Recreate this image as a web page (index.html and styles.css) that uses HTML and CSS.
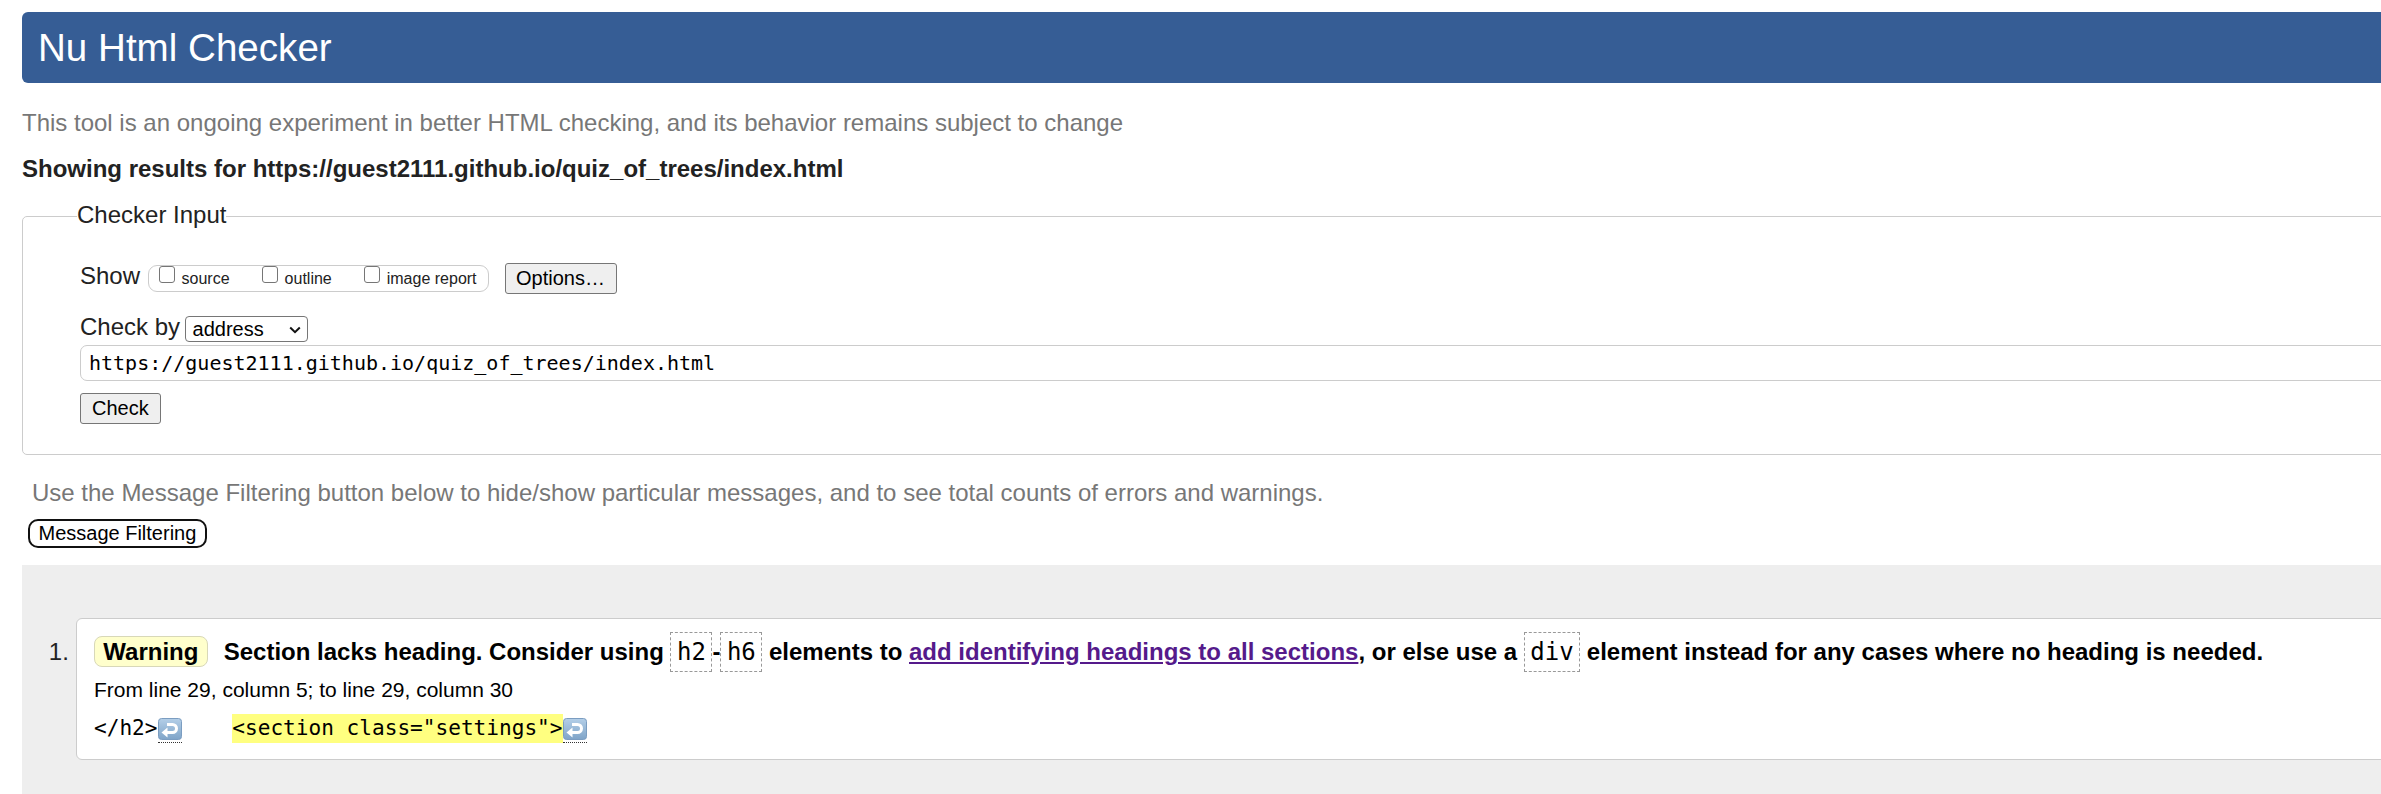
FILE: index.html
```html
<!DOCTYPE html>
<html lang="en">
<head>
<meta charset="utf-8">
<title>Nu Html Checker</title>
<link rel="stylesheet" href="styles.css">
</head>
<body>
<div class="page">
  <h1 class="title">Nu Html Checker</h1>
  <p class="intro">This tool is an ongoing experiment in better HTML checking, and its behavior remains subject to change</p>
  <p class="showing">Showing results for https://guest2111.github.io/quiz_of_trees/index.html</p>

  <form class="checker-form" onsubmit="return false">
    <fieldset class="input-box">
      <legend>Checker Input</legend>
      <div class="row row-show">
        <span class="lbl">Show</span>
        <span class="opts">
          <label class="opt"><input type="checkbox"><span>source</span></label>
          <label class="opt"><input type="checkbox"><span>outline</span></label>
          <label class="opt"><input type="checkbox"><span>image report</span></label>
        </span>
        <button type="button" class="btn options">Options…</button>
      </div>
      <div class="row row-by">
        <span class="lbl">Check by</span>
        <span class="select"><span>address</span><svg class="chev" width="12" height="8" viewBox="0 0 12 8"><path d="M1.2 1.5 L6 6.2 L10.8 1.5" fill="none" stroke="#111" stroke-width="2"/></svg></span>
      </div>
      <input class="url" type="text" value="https://guest2111.github.io/quiz_of_trees/index.html">
      <button type="button" class="btn check">Check</button>
    </fieldset>
  </form>

  <p class="filter-note">Use the Message Filtering button below to hide/show particular messages, and to see total counts of errors and warnings.</p>
  <button type="button" class="filter-btn">Message Filtering</button>

  <div class="results">
    <ol class="messages">
      <li class="msg">
        <p class="msg-head"><span class="badge">Warning</span>Section lacks heading. Consider using <code>h2</code>-<code>h6</code> elements to <a href="#">add identifying headings to all sections</a>, or else use a <code>div</code> element instead for any cases where no heading is needed.</p>
        <p class="location">From line 29, column 5; to line 29, column 30</p>
        <p class="extract">&lt;/h2&gt;<b class="lf" title="Line break"><svg width="24" height="22" viewBox="0 0 24 22"><defs><linearGradient id="lfa" x1="0" y1="0" x2="0" y2="1"><stop offset="0" stop-color="#b4cfe8"/><stop offset="1" stop-color="#7fa4c8"/></linearGradient></defs><rect x="0.5" y="0.5" width="23" height="21" rx="3" fill="url(#lfa)" stroke="#7b9dc1"/><path d="M9 6.5 H14.5 A4 4 0 0 1 14.5 14.5 H8" fill="none" stroke="#fff" stroke-width="3"/><path d="M3.5 14.5 L9.5 9.5 V19.5 Z" fill="#fff"/></svg></b>    <mark>&lt;section class="settings"&gt;</mark><b class="lf" title="Line break"><svg width="24" height="22" viewBox="0 0 24 22"><defs><linearGradient id="lfb" x1="0" y1="0" x2="0" y2="1"><stop offset="0" stop-color="#b4cfe8"/><stop offset="1" stop-color="#7fa4c8"/></linearGradient></defs><rect x="0.5" y="0.5" width="23" height="21" rx="3" fill="url(#lfb)" stroke="#7b9dc1"/><path d="M9 6.5 H14.5 A4 4 0 0 1 14.5 14.5 H8" fill="none" stroke="#fff" stroke-width="3"/><path d="M3.5 14.5 L9.5 9.5 V19.5 Z" fill="#fff"/></svg></b></p>
      </li>
    </ol>
  </div>
</div>
</body>
</html>
```

FILE: styles.css
```css
html, body {
  margin: 0;
  padding: 0;
  background: #fff;
  overflow: hidden;
}

body {
  font-family: "Liberation Sans", Arial, sans-serif;
  color: #222;
}

.page {
  width: 2600px;
  padding-left: 22px;
}

.title {
  margin: 12px 0 0;
  height: 71px;
  line-height: 71px;
  padding: 0 16px;
  font-size: 38.6px;
  font-weight: normal;
  color: #fff;
  background: #365d95;
  border-radius: 6px;
}

.intro {
  margin: 26px 0 0;
  font-size: 24px;
  line-height: 28px;
  color: #777;
}

.showing {
  margin: 18px 0 0;
  font-size: 24px;
  line-height: 28px;
  font-weight: bold;
  color: #222;
}

.checker-form {
  margin: 0;
}

.input-box {
  margin: 18px 0 0;
  padding: 0 0 30px 57px;
  border: 1px solid #ccc;
  border-radius: 5px;
  min-width: 0;
}

.input-box legend {
  margin-left: -3px;
  padding: 0 0 3px;
  font-size: 24px;
  line-height: 28px;
  color: #222;
}

.row {
  display: flex;
  align-items: flex-start;
}

.row-show {
  margin-top: 30px;
  height: 32px;
}

.lbl {
  font-size: 24px;
  line-height: 28px;
}

.opts {
  display: flex;
  align-items: flex-start;
  box-sizing: border-box;
  height: 27px;
  margin: 3px 0 0 7.5px;
  padding: 0 11px 0 10px;
  border: 1px solid #ccc;
  border-radius: 9px;
}

.opt {
  display: flex;
  align-items: flex-start;
  font-size: 16px;
  line-height: 20px;
  margin-right: 32px;
  color: #222;
}

.opt:last-child {
  margin-right: 0;
}

.opt input {
  appearance: none;
  -webkit-appearance: none;
  box-sizing: border-box;
  width: 16px;
  height: 17px;
  margin: 0 7px 0 0;
  border: 1px solid #767676;
  border-radius: 3px;
  background: #fff;
}

.opt span {
  margin-top: 2.8px;
}

.btn {
  box-sizing: border-box;
  height: 31px;
  font-family: "Liberation Sans", Arial, sans-serif;
  font-size: 20px;
  line-height: 23px;
  color: #000;
  background: #efefef;
  border: 1px solid #767676;
  border-radius: 3px;
  padding: 0 10.5px;
}

.options {
  margin: 1px 0 0 16px;
}

.row-by {
  margin-top: 19px;
  height: 29px;
}

.select {
  box-sizing: border-box;
  display: flex;
  align-items: center;
  justify-content: space-between;
  width: 123px;
  height: 26px;
  margin: 3px 0 0 5px;
  padding: 0 6px 0 6.5px;
  border: 1px solid #767676;
  border-radius: 4px;
  font-size: 20px;
  line-height: 24px;
  color: #000;
  background: #fff;
}

.chev {
  display: block;
  margin-top: 1px;
}

.url {
  display: block;
  box-sizing: border-box;
  width: 100%;
  height: 36px;
  margin: 3px 0 0;
  padding: 0 8px;
  border: 1px solid #ccc;
  border-radius: 7px;
  font-family: "DejaVu Sans Mono", monospace;
  font-size: 20px;
  color: #000;
  background: #fff;
  outline: none;
}

.check {
  display: block;
  margin-top: 12px;
  padding: 0 11px;
}

.filter-note {
  margin: 24.4px 0 0 10px;
  font-size: 24px;
  line-height: 28px;
  color: #777;
}

.filter-btn {
  display: block;
  box-sizing: border-box;
  height: 29px;
  margin: 11.6px 0 0 6px;
  padding: 0 8.5px;
  font-family: "Liberation Sans", Arial, sans-serif;
  font-size: 20px;
  line-height: 23px;
  color: #000;
  background: #fff;
  border: 2px solid #111;
  border-radius: 10px;
}

.results {
  margin-top: 17px;
  min-height: 280px;
  background: #eee;
}

.messages {
  margin: 0;
  padding: 53px 0 0 53.5px;
  list-style: decimal outside;
}

.msg {
  border: 1px solid #ccc;
  border-radius: 6px;
  background: #fff;
  padding: 17px 17.5px 16px;
  color: #000;
}

.msg::marker {
  font-size: 24px;
  color: #222;
}

.msg-head {
  margin: 0;
  font-size: 24px;
  line-height: 28px;
  font-weight: bold;
  color: #000;
}

.badge {
  display: inline-block;
  padding: 0 8.3px;
  line-height: 29px;
  border: 1px solid #d8d8b8;
  border-radius: 8px;
  background: #ffffcc;
  margin-right: 16px;
}

.msg-head code {
  font-family: "DejaVu Sans Mono", monospace;
  font-size: 24px;
  font-weight: normal;
  padding: 5px 5.5px;
  border: 1px dashed #999;
}

.msg-head a {
  color: #551a8b;
  text-decoration: underline;
}

.location {
  margin: 10px 0 0;
  font-size: 21px;
  line-height: 26px;
}

.extract {
  margin: 11px 0 0;
  font-family: "DejaVu Sans Mono", monospace;
  font-size: 21.1px;
  line-height: 28px;
  white-space: pre;
}

.extract mark {
  background: #ffff80;
  color: #000;
  padding: 1px 0 3px;
}

.lf {
  display: inline-block;
  vertical-align: -8px;
  line-height: 0;
  padding-bottom: 2px;
  border-bottom: 1px dotted #333;
}

.lf svg {
  display: block;
}
```
